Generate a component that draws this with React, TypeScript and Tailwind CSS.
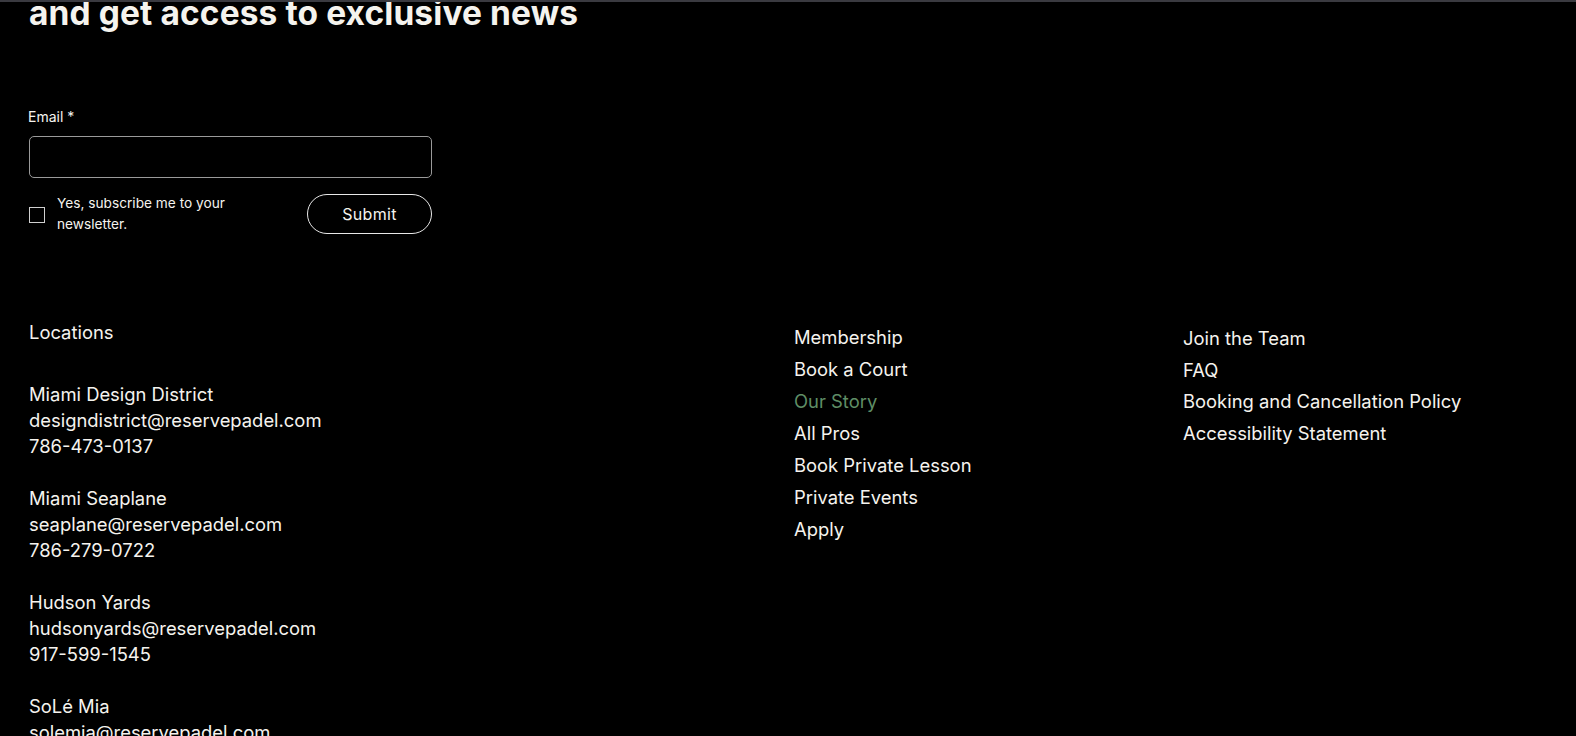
import React from "react";

const locations = [
  { name: "Miami Design District", email: "designdistrict@reservepadel.com", phone: "786-473-0137" },
  { name: "Miami Seaplane", email: "seaplane@reservepadel.com", phone: "786-279-0722" },
  { name: "Hudson Yards", email: "hudsonyards@reservepadel.com", phone: "917-599-1545" },
  { name: "SoLé Mia", email: "solemia@reservepadel.com", phone: "" },
];

const mid = ["Membership", "Book a Court", "Our Story", "All Pros", "Book Private Lesson", "Private Events", "Apply"];
const right = ["Join the Team", "FAQ", "Booking and Cancellation Policy", "Accessibility Statement"];

export default function App() {
  return (
    <div
      className="w-[1576px] h-[736px] overflow-hidden bg-black text-[#f5f3ee] border-t-2 border-[#3a3a40]"
      style={{ fontFamily: "Inter, 'Noto Sans', sans-serif" }}
    >
      <div className="pl-[29px]">
        <h2 className="mt-[-9px] text-[33.5px] leading-[40px] font-bold tracking-[0.1px] whitespace-nowrap">
          and get access to exclusive news
        </h2>

        <form className="mt-[75px] w-[403px]">
          <label className="block text-[14px] leading-[18px] -ml-px">Email *</label>
          <div className="mt-[10px] h-[42px] rounded-[5px] border border-[#9a9a9a]" />
          <div className="mt-[15px] flex items-center justify-between">
            <div className="flex items-center">
              <div className="w-[16px] h-[16px] border border-[#d0d0d0] mt-[2px]" />
              <div className="ml-[12px] text-[13.7px] leading-[21px] w-[210px]">
                Yes, subscribe me to your newsletter.
              </div>
            </div>
            <button
              type="button"
              className="w-[125px] h-[40px] rounded-full border border-[#e8e8e8] text-[16px] tracking-[0.3px] text-[#f5f3ee]"
            >
              Submit
            </button>
          </div>
        </form>
      </div>

      <div className="mt-[84px] flex">
        <div className="w-[794px] pl-[29px] text-[18.4px] leading-[26px]">
          <div className="mb-[36px]">Locations</div>
          {locations.map((l) => (
            <div key={l.name} className="mb-[26px]">
              <div>{l.name}</div>
              <div>{l.email}</div>
              {l.phone && <div>{l.phone}</div>}
            </div>
          ))}
        </div>
        <div className="w-[389px] pt-[2px] text-[18.4px] leading-[32px]">
          {mid.map((m) => (
            <div key={m} className={m === "Our Story" ? "text-[#5f8e66]" : ""}>
              {m}
            </div>
          ))}
        </div>
        <div className="pt-[4px] text-[18.4px] leading-[31.7px]">
          {right.map((m) => (
            <div key={m}>{m}</div>
          ))}
        </div>
      </div>
    </div>
  );
}
